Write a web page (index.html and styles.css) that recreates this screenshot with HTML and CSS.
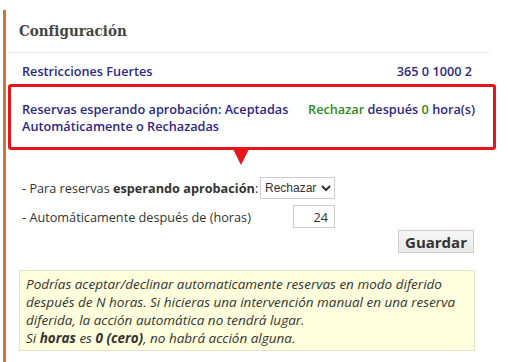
FILE: index.html
```html
<!DOCTYPE html>
<html lang="es">
<head>
  <meta charset="UTF-8" />
  <title>Configuración</title>
  <link rel="stylesheet" href="styles.css">
</head>
<body>

  <div class="panel">
    <h2 class="panel-title">Configuración</h2>

    <div class="rule-row">
      <span>Restricciones Fuertes</span>
      <span>365 0 1000 2</span>
    </div>

    <div class="rule-row highlight">
      <span class="rule-name">Reservas esperando aprobación: Aceptadas Automáticamente o Rechazadas</span>
      <span class="rule-value"><span class="green">Rechazar</span> después <span class="green">0</span> hora(s)</span>
    </div>

    <form class="settings" onsubmit="return false">
      <div class="field">
        <label for="action">- Para reservas <b>esperando aprobación</b>:</label>
        <select id="action">
          <option>Rechazar</option>
          <option>Aceptar</option>
        </select>
      </div>
      <div class="field">
        <label for="hours">- Automáticamente después de (horas)</label>
        <input type="text" id="hours" value="24">
      </div>
      <div class="actions">
        <button class="save">Guardar</button>
      </div>
    </form>

    <div class="note">
      Podrías aceptar/declinar automaticamente reservas en modo diferido
      después de N horas. Si hicieras una intervención manual en una reserva
      diferida, la acción automática no tendrá lugar.<br>
      Si <b>horas</b> es <b>0 (cero)</b>, no habrá acción alguna.
    </div>
  </div>

</body>
</html>
```

FILE: styles.css
```css
body {
  font-family: 'Open Sans', sans-serif;
  font-size: 12.7px;
  margin: 0;
  background: white;
  color: #333;
}
.panel {
  margin: 10px 0 0 3px;
  border-left: 3px solid #c8763a;
  width: 490px;
  min-height: 360px;
}
.panel-title {
  font-family: 'DejaVu Serif', serif;
  font-stretch: condensed;
  font-weight: bold;
  font-size: 15px;
  color: #444;
  margin: 0 7px 0 2px;
  padding: 12px 0 12px 11px;
  border-bottom: 1px solid #e6e6e6;
}
.rule-row {
  display: flex;
  justify-content: space-between;
  color: #2b2785;
  font-weight: 600;
  line-height: 17px;
  padding: 10px 24px 9px 16px;
}
.highlight {
  position: relative;
  margin: -5px 0 0 2px;
  border: 3px solid #e8141c;
  border-radius: 3px;
  padding: 14px 18px 12px 11px;
}
.highlight::after {
  content: "";
  position: absolute;
  left: 222px;
  top: 100%;
  margin-top: 2px;
  border-left: 8px solid transparent;
  border-right: 8px solid transparent;
  border-top: 16px solid #e8141c;
}
.rule-name {
  width: 280px;
}
.green {
  color: #2c8a22;
}
.settings {
  padding: 27px 0 0 16px;
}
.field {
  display: flex;
  justify-content: space-between;
  align-items: center;
  width: 313px;
  margin-bottom: 6px;
}
.field select {
  font-family: 'Liberation Sans', sans-serif;
  font-size: 12px;
  height: 22px;
  width: 75px;
  color: #333;
  border: 1px solid #ccc;
  background: white;
  padding: 0;
}
.field input {
  font-family: 'Open Sans', sans-serif;
  font-size: 12.7px;
  width: 42px;
  height: 23px;
  box-sizing: border-box;
  text-align: right;
  border: 1px solid #ccc;
  padding: 0 6px;
  color: #333;
}
.actions {
  display: flex;
  justify-content: flex-end;
  width: 452px;
  margin-top: -4px;
}
button.save {
  font-family: 'Open Sans', sans-serif;
  font-weight: bold;
  font-size: 15px;
  color: #333;
  background: linear-gradient(#f6f6f6, #e8e8e8);
  border: 1px solid #ccc;
  padding: 0 6px;
  height: 23px;
  width: 76px;
}
.note {
  margin: 17px 0 0 13px;
  width: 441px;
  background: #ffffdd;
  border: 1px solid #e4e4c6;
  padding: 4px 7px 3px 6px;
  font-size: 13.5px;
  font-style: italic;
  line-height: 18px;
}
```
